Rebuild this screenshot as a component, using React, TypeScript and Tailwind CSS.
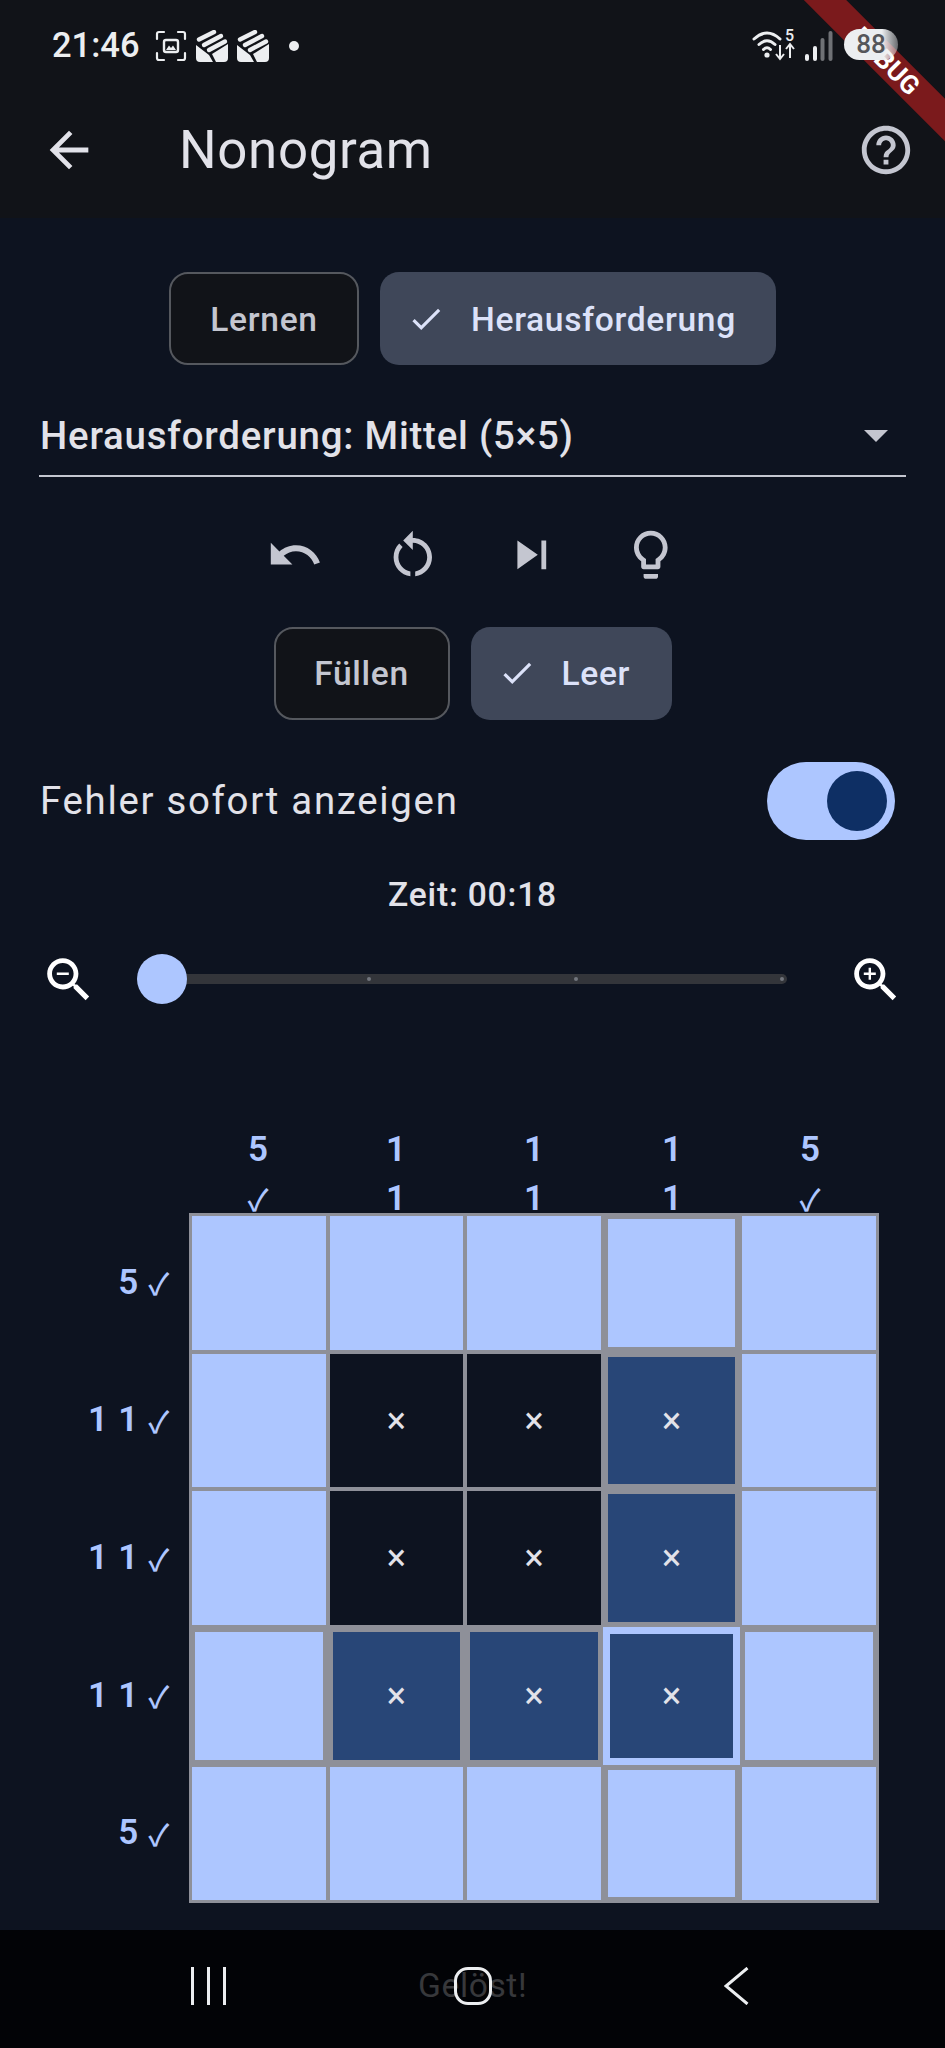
import React from "react";

type CellKind = "fill" | "empty" | "mark";

const board: CellKind[][] = [
  ["fill", "fill", "fill", "fill", "fill"],
  ["fill", "empty", "empty", "mark", "fill"],
  ["fill", "empty", "empty", "mark", "fill"],
  ["fill", "mark", "mark", "mark", "fill"],
  ["fill", "fill", "fill", "fill", "fill"],
];

const MaterialIcon = ({ d, className }: { d: string; className?: string }) => (
  <svg viewBox="0 0 24 24" fill="currentColor" className={className}>
    <path d={d} />
  </svg>
);

const ICONS = {
  back: "M20 11H7.83l5.59-5.59L12 4l-8 8 8 8 1.41-1.41L7.83 13H20v-2z",
  help: "M11 18h2v-2h-2v2zm1-16C6.48 2 2 6.48 2 12s4.48 10 10 10 10-4.48 10-10S17.52 2 12 2zm0 18c-4.41 0-8-3.59-8-8s3.59-8 8-8 8 3.59 8 8-3.59 8-8 8zm0-14c-2.21 0-4 1.79-4 4h2c0-1.1.9-2 2-2s2 .9 2 2c0 2-3 1.75-3 5h2c0-2.25 3-2.5 3-5 0-2.21-1.79-4-4-4z",
  undo: "M12.5 8c-2.65 0-5.05.99-6.9 2.6L2 7v9h9l-3.62-3.62c1.39-1.16 3.16-1.88 5.12-1.88 3.54 0 6.55 2.31 7.6 5.5l2.37-.78C21.08 11.03 17.15 8 12.5 8z",
  restart: "M12 5V2L8 6l4 4V7c3.31 0 6 2.69 6 6 0 2.97-2.17 5.43-5 5.91v2.02c3.95-.49 7-3.85 7-7.93 0-4.42-3.58-8-8-8zm-6 8c0-1.65.67-3.15 1.76-4.24L6.34 7.34C4.9 8.79 4 10.79 4 13c0 4.08 3.05 7.44 7 7.93v-2.02c-2.83-.48-5-2.94-5-5.91z",
  skip: "M6 18l8.5-6L6 6v12zM16 6v12h2V6h-2z",
  bulb: "M9 21c0 .55.45 1 1 1h4c.55 0 1-.45 1-1v-1H9v1zm3-19C8.14 2 5 5.14 5 9c0 2.38 1.19 4.47 3 5.74V17c0 .55.45 1 1 1h6c.55 0 1-.45 1-1v-2.26c1.81-1.27 3-3.36 3-5.74 0-3.86-3.14-7-7-7zm2.85 11.1l-.85.6V16h-4v-2.3l-.85-.6C7.8 12.16 7 10.63 7 9c0-2.76 2.24-5 5-5s5 2.24 5 5c0 1.63-.8 3.16-2.15 4.1z",
  zoomOut: "M15.5 14h-.79l-.28-.27C15.41 12.59 16 11.11 16 9.5 16 5.91 13.09 3 9.5 3S3 5.91 3 9.5 5.91 16 9.5 16c1.61 0 3.09-.59 4.23-1.57l.27.28v.79l5 4.99L20.49 19l-4.99-5zm-6 0C7.01 14 5 11.99 5 9.5S7.01 5 9.5 5 14 7.01 14 9.5 11.99 14 9.5 14zM7 9h5v1H7z",
  zoomIn: "M15.5 14h-.79l-.28-.27C15.41 12.59 16 11.11 16 9.5 16 5.91 13.09 3 9.5 3S3 5.91 3 9.5 5.91 16 9.5 16c1.61 0 3.09-.59 4.23-1.57l.27.28v.79l5 4.99L20.49 19l-4.99-5zM9.5 14C7.01 14 5 11.99 5 9.5S7.01 5 9.5 5 14 7.01 14 9.5 11.99 14 9.5 14zM12 10h-2v2H9v-2H7V9h2V7h1v2h2v1z",
  check: "M9 16.17L4.83 12l-1.42 1.41L9 19 21 7l-1.41-1.41z",
};

// status bar notification glyph, envelope with stripes
const MailStack = () => (
  <svg viewBox="0 0 32 32" className="w-[32px] h-[32px] text-[#eceef0]">
    <path d="M0 15 L13 25 L17 32 H4 Q0 32 0 28 Z M32 14 V28 Q32 32 28 32 H20 L16 24 Z" fill="currentColor" />
    <g stroke="currentColor" strokeWidth="4.4" strokeLinecap="round">
      <path d="M3 9.5 L18 2" />
      <path d="M8 15 L25 6" />
      <path d="M13 20 L29 11.5" />
    </g>
  </svg>
);

const ScreenshotIcon = () => (
  <svg viewBox="0 0 32 32" fill="none" className="w-[32px] h-[32px] text-[#eceef0]">
    <path d="M2 9V4Q2 2 4 2H9M23 2H28Q30 2 30 4V9M30 23V28Q30 30 28 30H23M9 30H4Q2 30 2 28V23" stroke="currentColor" strokeWidth="2.2" strokeLinecap="round" />
    <rect x="9" y="10" width="14" height="12" rx="2" stroke="currentColor" strokeWidth="2.4" />
    <path d="M11 20 L14 15.5 L16 18 L18 15.5 L21 20 Z" fill="currentColor" />
  </svg>
);

const StatusRight = () => (
  <div className="flex items-start ml-auto">
    <svg viewBox="0 0 44 36" fill="none" className="w-[44px] h-[36px] text-[#eceef0] mt-[-3px]">
      <g stroke="currentColor" strokeWidth="3" strokeLinecap="round">
        <path d="M2 12 Q15 0 28 12" />
        <path d="M7 17.5 Q15 10 23 17.5" />
        <path d="M11.5 22.5 Q15 19 18.5 22.5" />
      </g>
      <circle cx="15" cy="28" r="2.6" fill="currentColor" />
      <g stroke="currentColor" strokeWidth="2">
        <path d="M28 18V31M24 27L28 32L32 27" />
        <path d="M38 31V18M34 22L38 17L42 22" />
      </g>
      <text x="33" y="14" fontSize="16" fontWeight="500" fill="currentColor" fontFamily="Roboto">5</text>
    </svg>
    <svg viewBox="0 0 30 30" className="w-[30px] h-[30px] ml-[9px] mt-[1px]">
      <rect x="0" y="23" width="4" height="7" rx="2" fill="#eceef0" />
      <rect x="8" y="15" width="4" height="15" rx="2" fill="#eceef0" />
      <rect x="15.5" y="7" width="4" height="23" rx="2" fill="#6f7175" />
      <rect x="23.5" y="0" width="4" height="30" rx="2" fill="#6f7175" />
    </svg>
  </div>
);

const Chip = ({ label, selected, className }: { label: string; selected?: boolean; className: string }) => (
  <div
    className={
      selected
        ? `h-[93px] rounded-[19px] bg-[#3f4759] text-[#dce2f9] flex items-center text-[33.6px] font-medium tracking-[0.67px] ${className}`
        : `h-[93px] rounded-[19px] bg-[#111318] border-[2px] border-[#55585e] text-[#c4c6d0] flex items-center justify-center text-[33.6px] font-medium tracking-[0.67px] ${className}`
    }
  >
    {selected && <MaterialIcon d={ICONS.check} className="w-[38px] h-[38px] mr-[26px] ml-[27px] shrink-0" />}
    <span className="pt-[3px]">{label}</span>
  </div>
);

const cellClass = (kind: CellKind, row: number, col: number) => {
  if (row === 3 && col === 3) return "bg-[#284677] border-[7px] border-[#adc6ff]";
  const thick = row === 3 || col === 3;
  if (kind === "fill") return thick ? "bg-[#adc6ff] border-[5px] border-[#8e9099]" : "bg-[#adc6ff] border-[2px] border-[#8e9099]";
  if (kind === "mark") return thick ? "bg-[#284677] border-[5px] border-[#8e9099]" : "bg-[#284677] border-[2px] border-[#8e9099]";
  return "bg-[#0d1320] border-[2px] border-[#8e9099]";
};

const rowClues = ["5", "1 1", "1 1", "1 1", "5"];
const colClues = [["5", "✓"], ["1", "1"], ["1", "1"], ["1", "1"], ["5", "✓"]];

export default function App() {
  return (
    <div className="relative w-[945px] h-[2048px] overflow-hidden flex flex-col bg-[#0d1320] font-[Roboto,sans-serif]">
      {/* App bar with status bar */}
      <header className="h-[218px] shrink-0 bg-[#111318]">
        <div className="h-[103px] pl-[52px] pr-[110px] pt-[30px] flex items-start">
          <span className="text-[34.5px] leading-[30px] font-medium text-[#eceef0] mr-[15px]">21:46</span>
          <ScreenshotIcon />
          <div className="ml-[9px]"><MailStack /></div>
          <div className="ml-[9px]"><MailStack /></div>
          <div className="ml-[20px] mt-[11px] w-[10px] h-[10px] rounded-full bg-[#eceef0]" />
          <StatusRight />
        </div>
        <div className="flex items-center h-[94px] pl-[40px] pr-[30px] text-[#e2e2e9]">
          <MaterialIcon d={ICONS.back} className="w-[58px] h-[58px] shrink-0" />
          <h1 className="ml-[81px] text-[52.8px] tracking-[0.65px] font-normal leading-none">Nonogram</h1>
          <MaterialIcon d={ICONS.help} className="w-[58px] h-[58px] ml-auto text-[#c4c6d0]" />
        </div>
      </header>

      {/* Game */}
      <main className="flex-1 flex flex-col">
        <div className="mt-[54px] flex justify-center gap-[21px]">
          <Chip label="Lernen" className="w-[190px]" />
          <Chip label="Herausforderung" selected className="w-[396px]" />
        </div>

        <div className="mt-[32px] ml-[39px] w-[867px] h-[80px] flex items-center border-b-[2px] border-[#c4c6d0]">
          <span className="ml-[1px] text-[38.4px] tracking-[0.8px] font-medium text-[#e2e2e9]">Herausforderung: Mittel (5×5)</span>
          <div className="ml-auto mr-[18px] w-0 h-0 border-l-[12px] border-r-[12px] border-t-[12px] border-l-transparent border-r-transparent border-t-[#c4c6d0]" />
        </div>

        <div className="mt-[49px] flex justify-center gap-[61px] text-[#c4c6d0]">
          <MaterialIcon d={ICONS.undo} className="w-[57.6px] h-[57.6px]" />
          <MaterialIcon d={ICONS.restart} className="w-[57.6px] h-[57.6px]" />
          <MaterialIcon d={ICONS.skip} className="w-[57.6px] h-[57.6px]" />
          <MaterialIcon d={ICONS.bulb} className="w-[57.6px] h-[57.6px]" />
        </div>

        <div className="mt-[43px] flex justify-center gap-[21px]">
          <Chip label="Füllen" className="w-[176px]" />
          <Chip label="Leer" selected className="w-[201px]" />
        </div>

        <div className="mt-[42px] h-[78px] pl-[40px] pr-[50px] flex items-center justify-between">
          <span className="text-[38.4px] tracking-[1.7px] text-[#e2e2e9]">Fehler sofort anzeigen</span>
          <div className="w-[128px] h-[78px] rounded-full bg-[#adc6ff] flex items-center justify-end pr-[8px]">
            <div className="w-[60px] h-[60px] rounded-full bg-[#0e2f64]" />
          </div>
        </div>

        <div className="mt-[32px] h-[47px] flex items-center justify-center text-[33.6px] tracking-[0.8px] font-medium text-[#e2e2e9]">
          Zeit: 00:18
        </div>

        <div className="mt-[32px] pl-[40px] pr-[40px] flex items-center text-white">
          <MaterialIcon d={ICONS.zoomOut} className="w-[57.6px] h-[57.6px]" />
          <div className="relative ml-[39px] w-[650px] h-[50px] flex items-center">
            <div className="w-full h-[10px] rounded-full bg-[#33353a]" />
            <div className="absolute left-[230px] top-[23px] w-[4px] h-[4px] rounded-full bg-[#72757d]" />
            <div className="absolute left-[437px] top-[23px] w-[4px] h-[4px] rounded-full bg-[#72757d]" />
            <div className="absolute left-[643px] top-[23px] w-[4px] h-[4px] rounded-full bg-[#72757d]" />
            <div className="absolute left-0 top-0 w-[50px] h-[50px] rounded-full bg-[#adc6ff]" />
          </div>
          <MaterialIcon d={ICONS.zoomIn} className="w-[57.6px] h-[57.6px] ml-auto" />
        </div>

        {/* Column clues */}
        <div className="mt-[117px] ml-[189px] w-[690px] h-[88px] grid grid-cols-5 text-center text-[35px] font-semibold leading-[49px] text-[#adc6ff]">
          {colClues.map((clue, i) => (
            <div key={i}>
              <div>{clue[0]}</div>
              <div className={clue[1] === "✓" ? "font-medium font-['Noto_Sans_CJK_JP'] text-[30px]" : ""}>{clue[1]}</div>
            </div>
          ))}
        </div>

        <div className="flex">
          {/* Row clues */}
          <div className="w-[189px] pr-[19px] py-[1px] grid grid-rows-5 text-[35px] font-semibold text-[#adc6ff]">
            {rowClues.map((clue, i) => (
              <div key={i} className="flex items-center justify-end gap-[9px] tracking-[0.8px]">
                <span>{clue}</span>
                <span className="font-medium font-['Noto_Sans_CJK_JP'] text-[30px]">✓</span>
              </div>
            ))}
          </div>

          <div className="w-[690px] h-[690px] border border-[#8e9099] grid grid-cols-5 grid-rows-5">
            {board.map((row, r) =>
              row.map((kind, c) => (
                <div key={`${r}-${c}`} className={`flex items-center justify-center text-[36px] leading-none text-[#e2e2e9] ${cellClass(kind, r, c)}`}>
                  {kind !== "fill" && "×"}
                </div>
              )),
            )}
          </div>
        </div>
      </main>

      {/* Android nav bar */}
      <nav className="relative h-[118px] shrink-0 bg-[#020306] flex justify-center items-start pt-[37px] gap-[164px]">
        <span className="absolute left-[418px] top-[31px] text-[33.6px] tracking-[0.6px] text-[#37383b]">Gelöst!</span>
        <div className="relative w-[100px] h-[38px] flex justify-center gap-[13px]">
          <div className="w-[3px] h-full bg-[#eceef0]" />
          <div className="w-[3px] h-full bg-[#eceef0]" />
          <div className="w-[3px] h-full bg-[#eceef0]" />
        </div>
        <div className="relative w-[100px] h-[38px] flex justify-center">
          <div className="w-[38px] h-full rounded-[14px] border-[3px] border-[#eceef0]" />
        </div>
        <div className="relative w-[100px] h-[38px] flex justify-center">
          <svg viewBox="0 0 25 38" fill="none" className="w-[25px] h-[38px]">
            <path d="M23.5 1 L2 19 L23.5 37" stroke="#eceef0" strokeWidth="3" />
          </svg>
        </div>
      </nav>

      {/* Debug banner */}
      <div className="absolute left-[736px] top-[46px] w-[300px] h-[30px] rotate-45 bg-[#7b1a1c] flex items-center justify-center text-[26px] font-bold text-white">
        DEBUG
      </div>
      {/* Battery pill sits over the banner */}
      <div className="absolute left-[844px] top-[29px] w-[54px] h-[31px] rounded-full bg-[linear-gradient(90deg,#eceef0_70%,#eceef099_90%,#eceef066)] flex items-center justify-center text-[26px] font-medium text-[#55565a]">
        88
      </div>
    </div>
  );
}
